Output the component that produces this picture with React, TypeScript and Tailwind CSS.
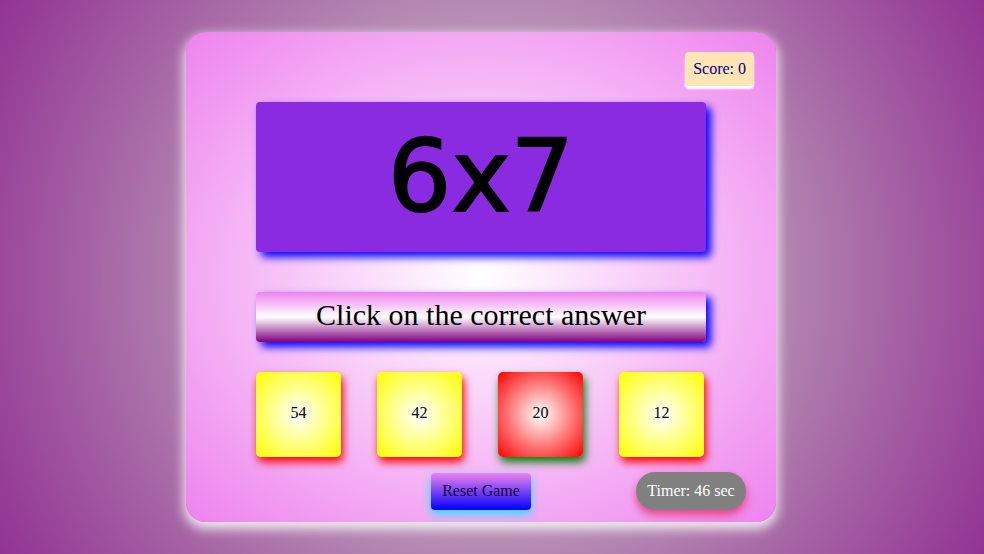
import React from 'react';

const choices = [
  { value: 54, wrong: false },
  { value: 42, wrong: false },
  { value: 20, wrong: true },
  { value: 12, wrong: false },
];

export default function App() {
  return (
    <div className="min-h-[554px] w-full bg-[radial-gradient(circle,#d5dcd0,#923393)] pt-[32px] pb-[32px] pl-[186px] font-['Liberation_Serif',serif]">
      <div className="flex h-[490px] w-[590px] flex-col items-center rounded-[20px] bg-[radial-gradient(white,violet)] shadow-[0_5px_12px_2px_rgba(255,255,255,0.85)]">
        <div className="flex w-full justify-end pt-[20px] pr-[22px]">
          <div className="rounded-[4px] bg-[#ffe4b5] px-[8px] py-[8px] text-[16px] leading-[18px] text-[#000080] shadow-[0_3px_2px_white]">
            Score: 0
          </div>
        </div>

        <div className="mt-[16px] flex h-[150px] w-[450px] items-center justify-center rounded-[4px] bg-[#8a2be2] shadow-[5px_5px_8px_blue]">
          <span className="font-['Comic_Sans_MS','DejaVu_Sans',sans-serif] text-[100px] leading-none text-black [-webkit-text-stroke:2px_black]">6x7</span>
        </div>

        <div className="mt-[40px] flex h-[50px] w-[450px] items-center justify-center rounded-[4px] bg-[linear-gradient(violet,white,purple)] pb-[5px] text-[30px] text-black shadow-[5px_5px_8px_blue]">
          Click on the correct answer
        </div>

        <div className="mt-[30px] flex w-[450px] gap-[36px]">
          {choices.map((c) => (
            <div
              key={c.value}
              className={
                c.wrong
                  ? 'flex h-[85px] w-[85px] items-center justify-center rounded-[5px] bg-[radial-gradient(white,red)] pb-[4px] text-[16px] text-black shadow-[2px_5px_8px_green]'
                  : 'flex h-[85px] w-[85px] items-center justify-center rounded-[5px] bg-[radial-gradient(white,yellow)] pb-[4px] text-[16px] text-black shadow-[2px_5px_8px_red]'
              }
            >
              {c.value}
            </div>
          ))}
        </div>

        <div className="mt-[15px] grid w-full grid-cols-[1fr_auto_1fr] items-center">
          <div />
          <button className="flex h-[37px] w-[100px] items-center justify-center rounded-[4px] bg-[linear-gradient(violet,blue)] text-[16px] text-[#1a0033] shadow-[0_4px_10px_#22e4ff]">
            Reset Game
          </button>
          <div className="flex justify-end pr-[30px]">
            <div className="flex h-[38px] w-[110px] items-center justify-center rounded-full bg-[#808080] text-[16px] text-white shadow-[0_5px_8px_rgba(220,20,60,0.6)]">
              Timer: 46 sec
            </div>
          </div>
        </div>
      </div>
    </div>
  );
}
